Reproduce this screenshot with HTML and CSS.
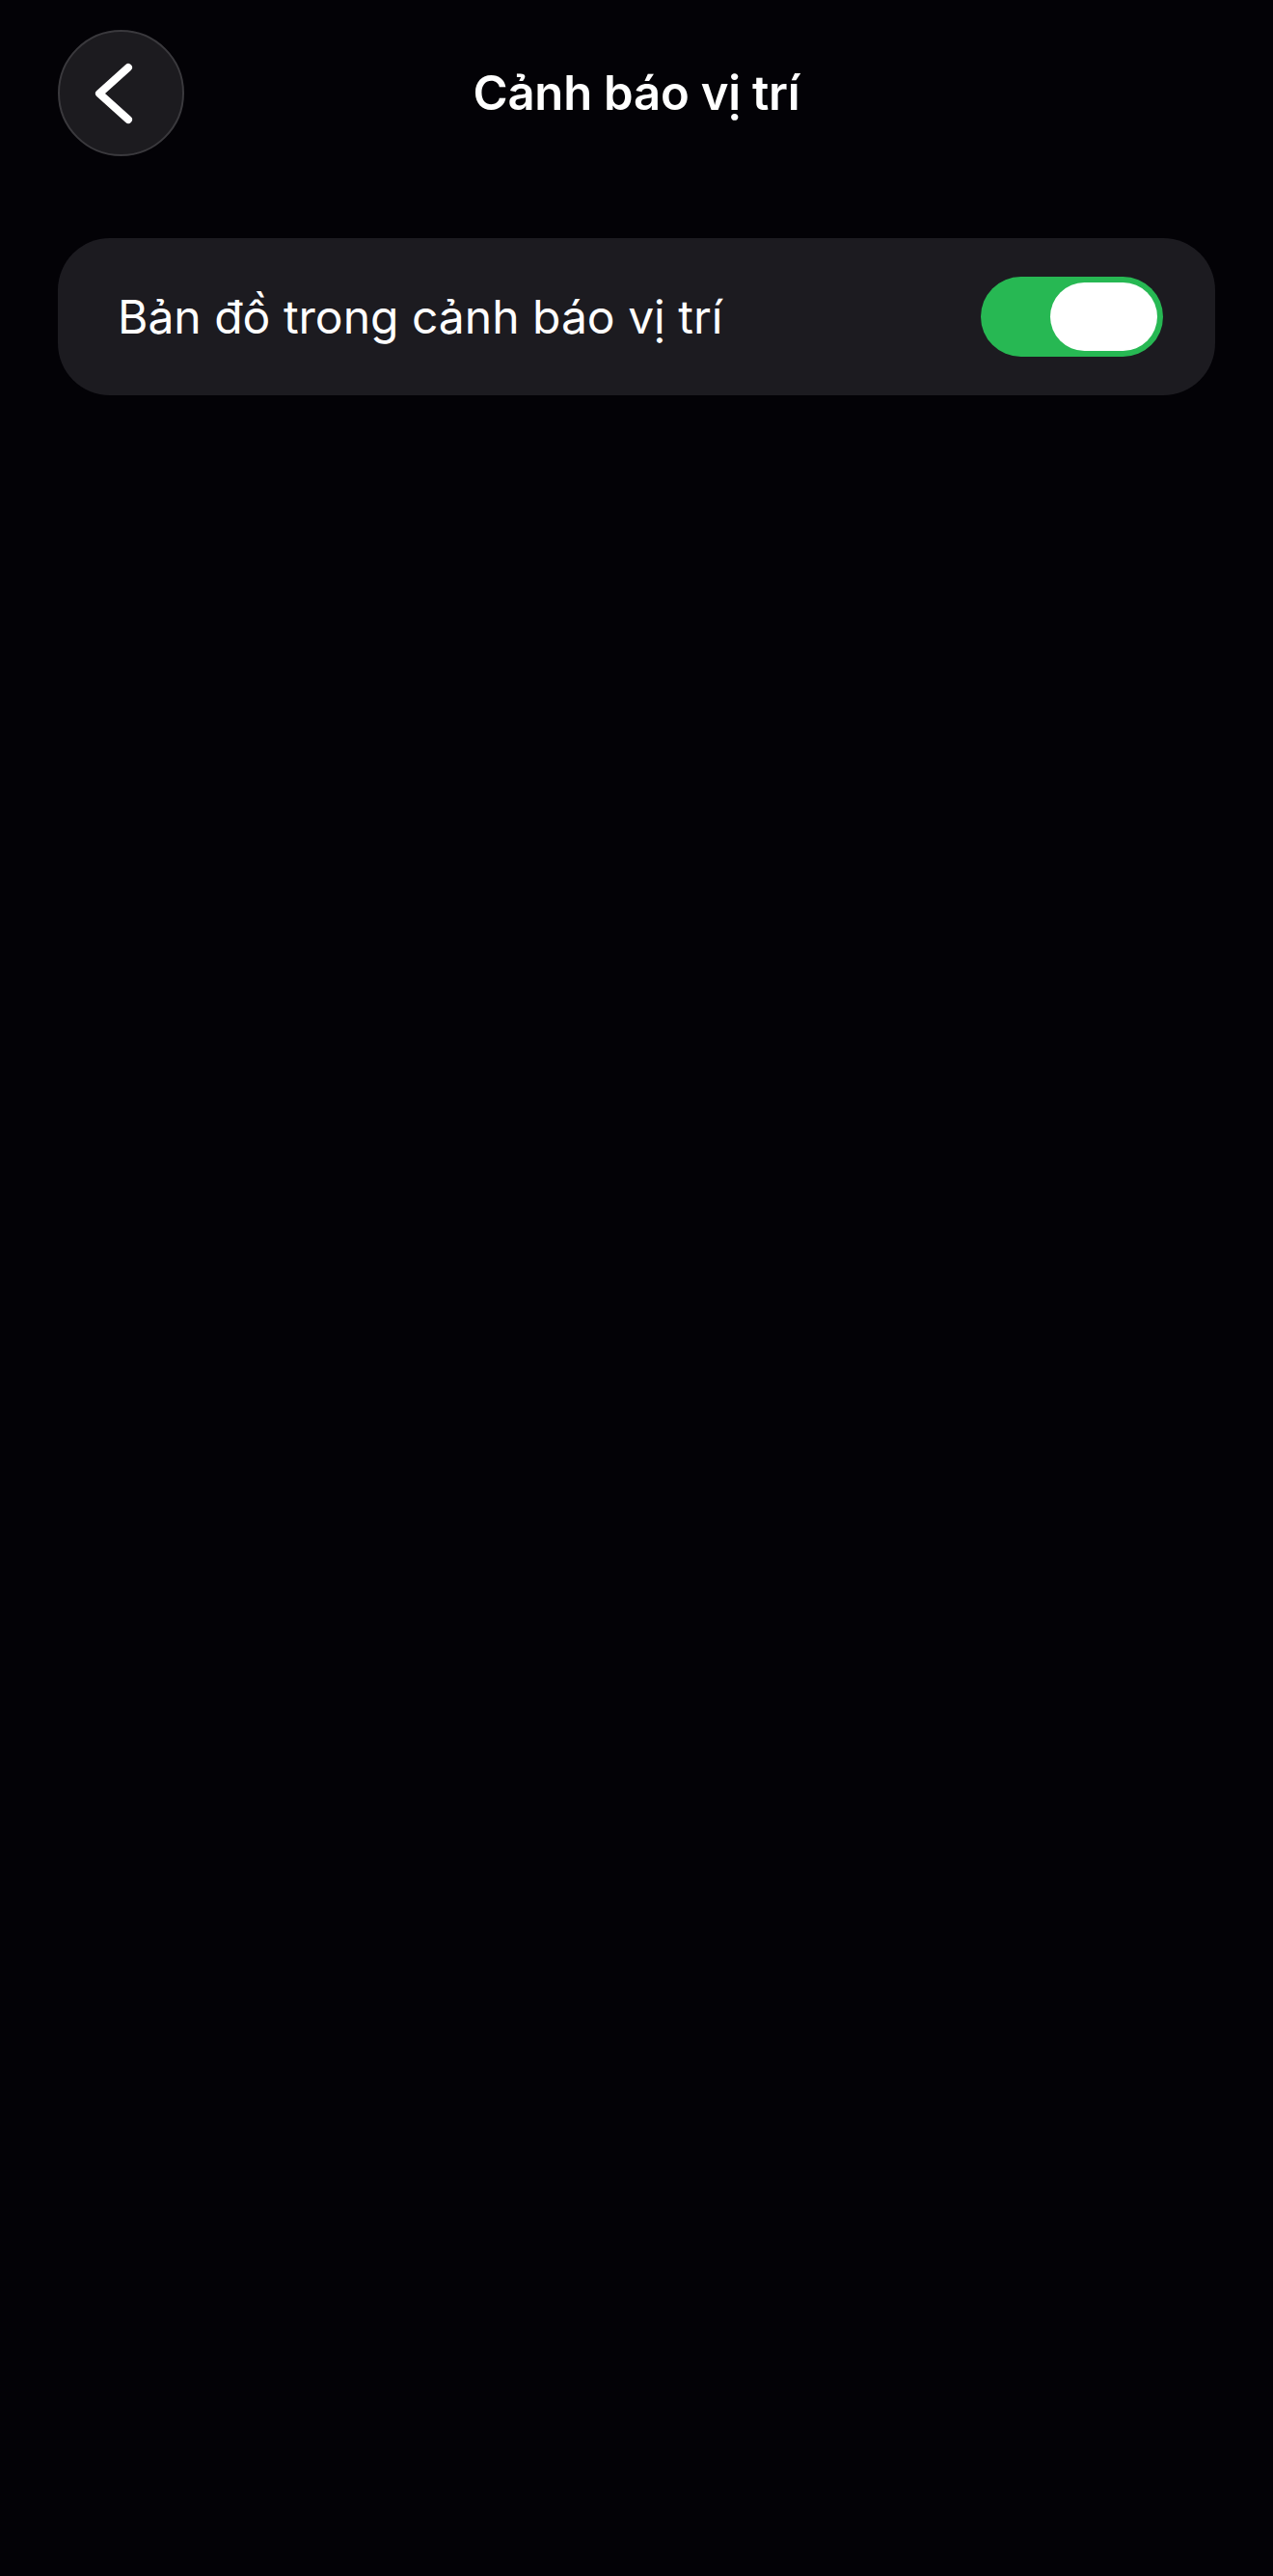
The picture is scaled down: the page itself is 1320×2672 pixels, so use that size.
FILE: index.html
```html
<!DOCTYPE html>
<html lang="vi">
<head>
<meta charset="utf-8">
<title>Cảnh báo vị trí</title>
<link rel="stylesheet" href="styles.css">
</head>
<body>
<div class="screen">
  <header class="navbar">
    <button class="back-btn" aria-label="Quay lại">
      <svg width="60" height="70" viewBox="0 0 60 70">
        <polyline points="41,17 11,44 41,71" transform="translate(0,-9)" fill="none" stroke="#fff" stroke-width="8" stroke-linecap="round" stroke-linejoin="round"/>
      </svg>
    </button>
    <h1 class="title">Cảnh báo vị trí</h1>
    <div class="spacer"></div>
  </header>
  <section class="card">
    <span class="label">Bản đồ trong cảnh báo vị trí</span>
    <div class="toggle on"><div class="knob"></div></div>
  </section>
</div>
</body>
</html>
```
FILE: styles.css
```css
html, body {
  margin: 0;
  padding: 0;
  background: #030206;
}
body {
  font-family: Inter, "Noto Sans", "Liberation Sans", sans-serif;
  color: #fff;
}
.screen {
  width: 1320px;
  height: 2672px;
  box-sizing: border-box;
  padding: 31px 60px 0 60px;
}
.navbar {
  display: flex;
  align-items: center;
  justify-content: space-between;
  height: 131px;
}
.back-btn {
  width: 131px;
  height: 131px;
  border-radius: 50%;
  background: #1c1b1f;
  border: 2px solid #3a393d;
  box-sizing: border-box;
  display: flex;
  align-items: center;
  justify-content: center;
  padding: 0 8px 0 0;
  margin: 0;
}
.back-btn svg { display: block; }
.title {
  margin: 0;
  font-size: 49px;
  font-weight: 600;
  letter-spacing: -0.2px;
  color: #fff;
}
.spacer { width: 131px; }
.card {
  margin-top: 85px;
  height: 163px;
  border-radius: 54px;
  background: #1c1b20;
  display: flex;
  align-items: center;
  justify-content: space-between;
  padding: 0 54px 0 62px;
}
.label {
  font-size: 48px;
  font-weight: 400;
  letter-spacing: 0;
  color: #fff;
}
.toggle {
  width: 189px;
  height: 83px;
  border-radius: 42px;
  background: #27b853;
  box-sizing: border-box;
  padding: 6px;
  display: flex;
  justify-content: flex-end;
}
.knob {
  width: 111px;
  height: 71px;
  border-radius: 36px;
  background: #fff;
}
```
